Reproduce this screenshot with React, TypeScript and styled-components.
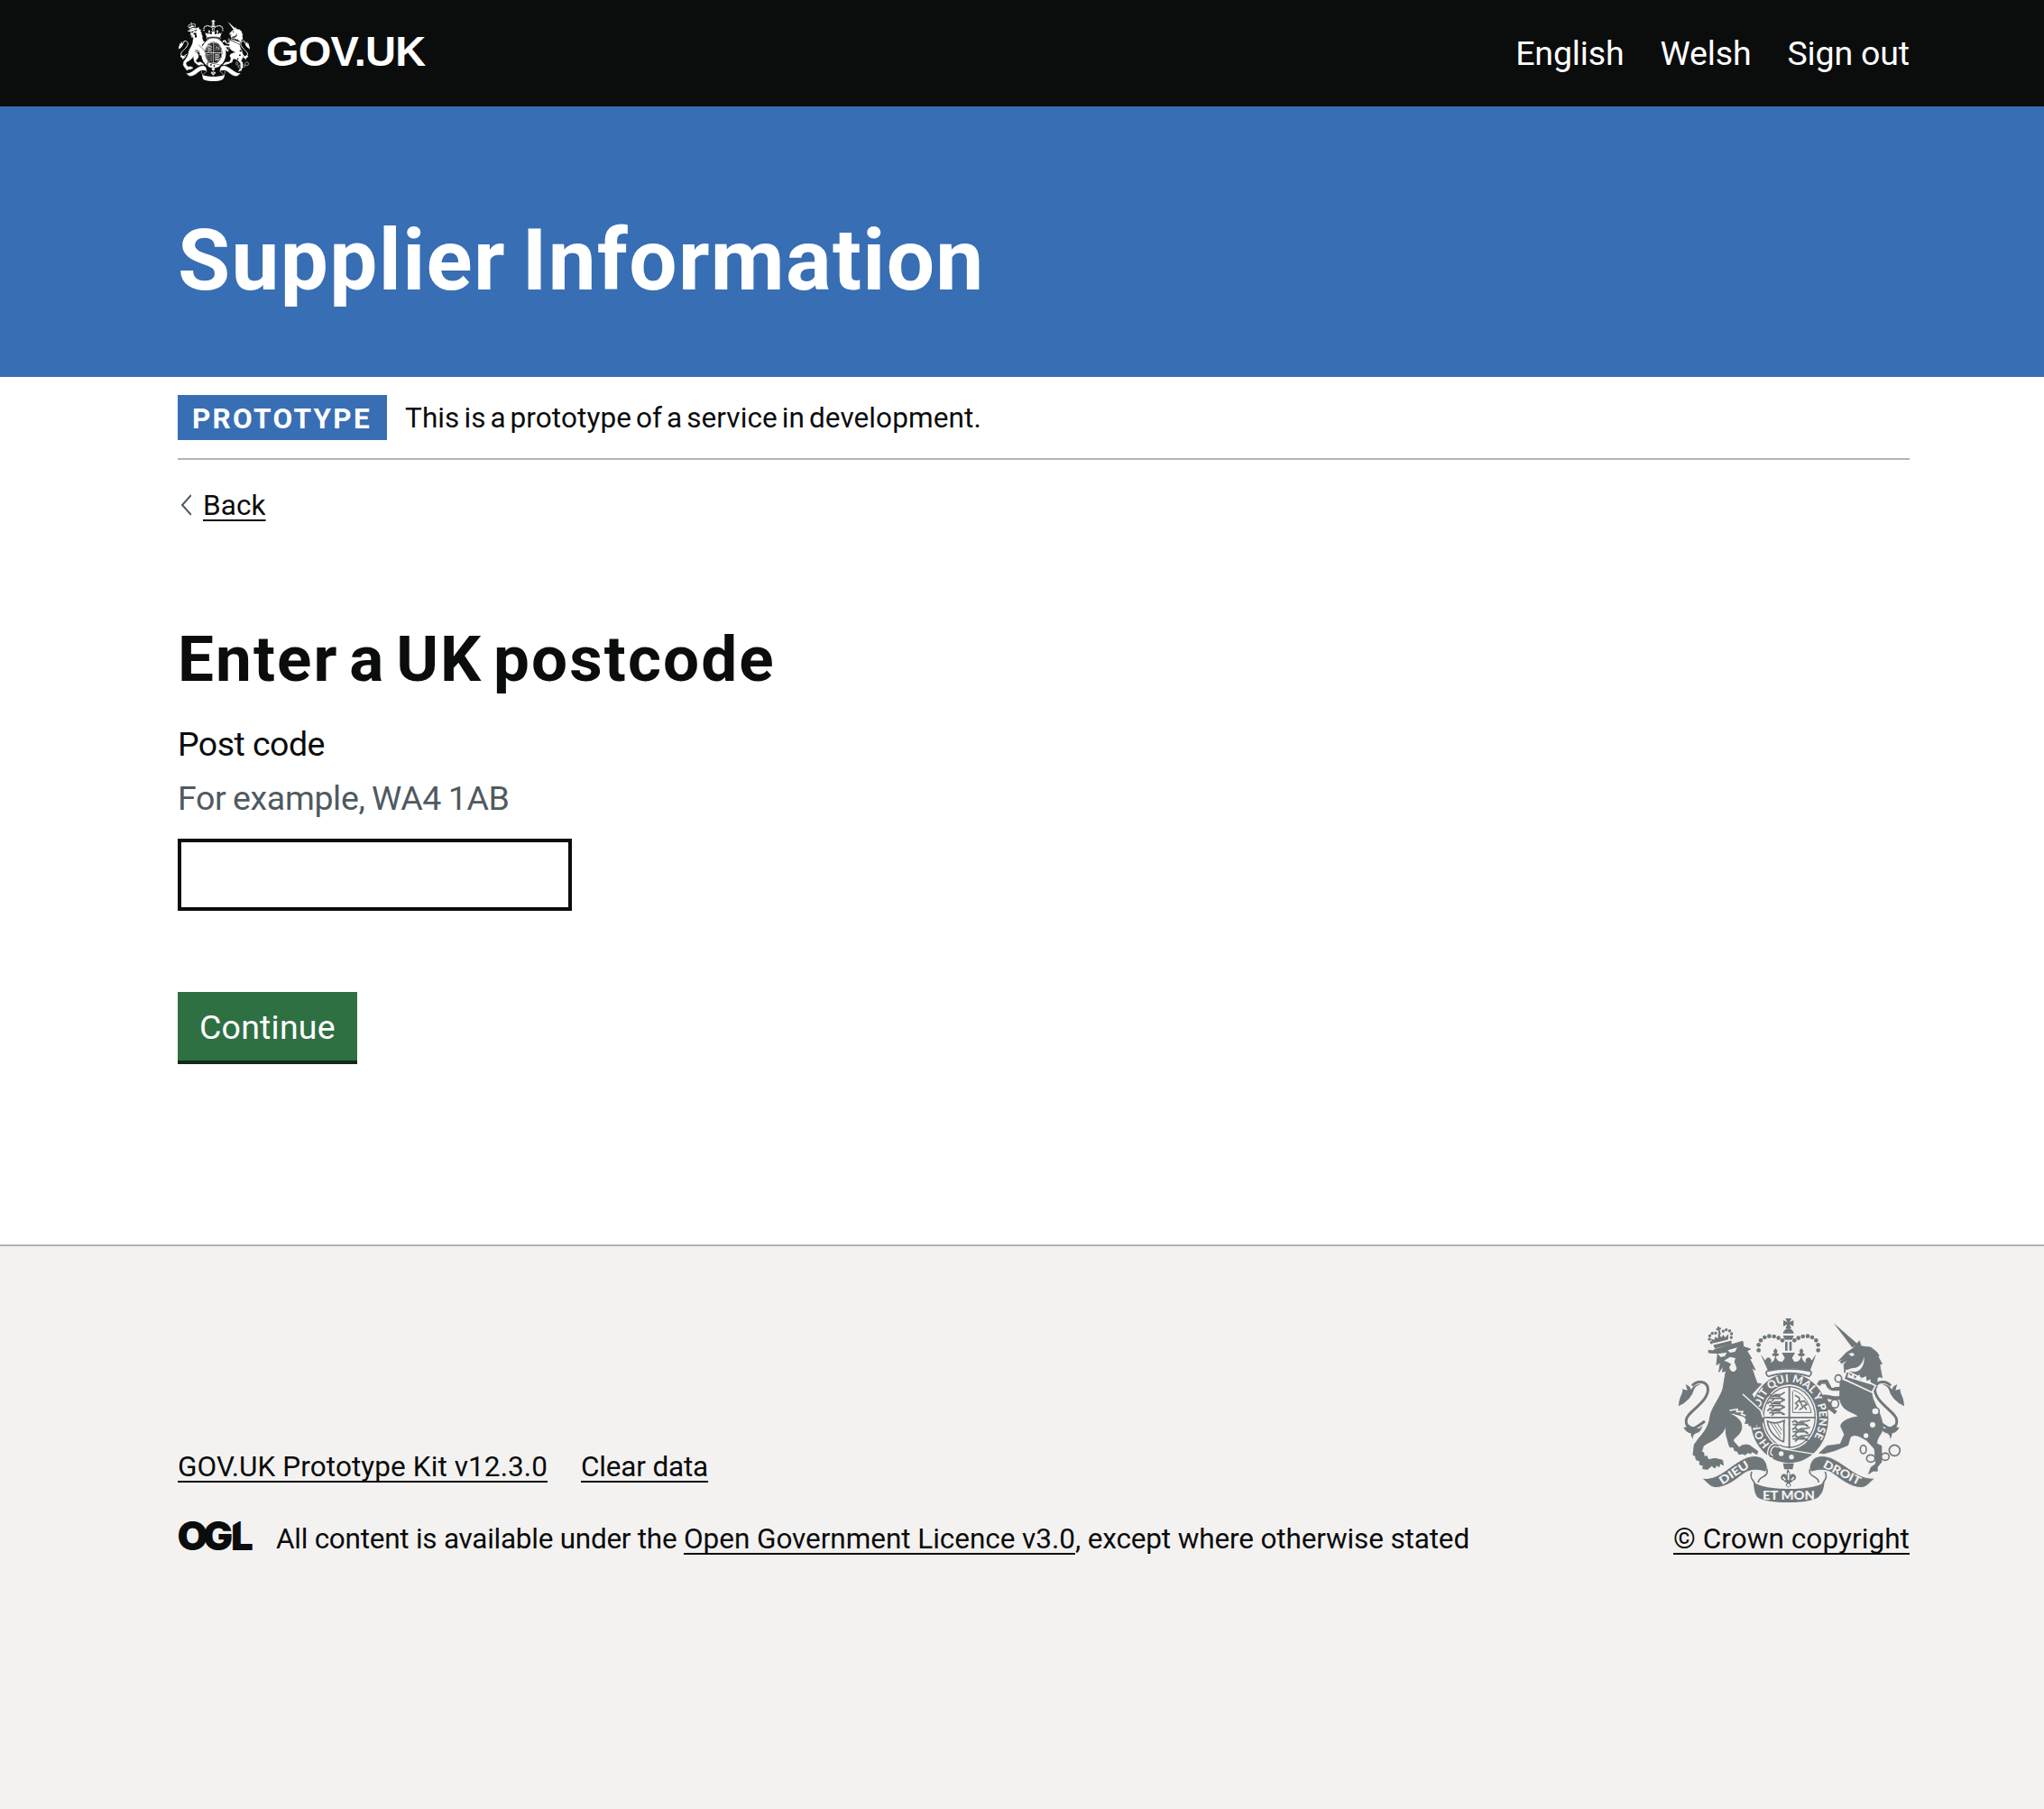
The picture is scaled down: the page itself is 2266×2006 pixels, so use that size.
import React from 'react';
import styled, { createGlobalStyle } from 'styled-components';

const ink = '#0b0c0c';
const blue = '#386eb4';
const grey = '#b1b4b6';
const paper = '#f3f2f1';

const GlobalStyle = createGlobalStyle`
  *, *::before, *::after { box-sizing: border-box; }
  body {
    margin: 0;
    background: ${paper};
    color: ${ink};
    font-family: Roboto, "Liberation Sans", Arial, sans-serif;
  }
`;

const Page = styled.div`
  display: flex;
  flex-direction: column;
  min-height: 2006px;
`;

const Container = styled.div`
  width: 1920px;
  margin-left: 197px;
`;

const Header = styled.header`
  height: 118px;
  background: ${ink};
`;

const HeaderInner = styled(Container)`
  display: flex;
  align-items: center;
  justify-content: space-between;
  height: 100%;
`;

const Brand = styled.a`
  display: flex;
  align-items: center;
  gap: 18px;
  padding: 0 0 6px 1px;
  color: #fff;
  text-decoration: none;
`;

const BrandName = styled.span`
  padding-top: 2px;
  font: 700 47px/60px "Liberation Sans", Arial, sans-serif;
  letter-spacing: -0.8px;
`;

const Nav = styled.nav`
  display: flex;
  gap: 40px;
`;

const NavLink = styled.a`
  color: #fff;
  font-size: 37.5px;
  line-height: 52px;
  letter-spacing: -0.15px;
  text-decoration: none;
`;

const Hero = styled.div`
  height: 300px;
  padding-top: 121px;
  background: ${blue};
`;

const HeroTitle = styled.div`
  color: #fff;
  font-size: 94.5px;
  font-weight: 700;
  line-height: 100px;
  letter-spacing: 1.35px;
  word-spacing: -7px;
`;

const Main = styled.main`
  height: 962px;
  background: #fff;
`;

const PhaseBanner = styled.div`
  display: flex;
  gap: 20px;
  padding: 20px 0;
  border-bottom: 2px solid ${grey};
`;

const PhaseTag = styled.strong`
  width: 232px;
  height: 50px;
  padding: 2px 0 0 16px;
  background: ${blue};
  color: #fff;
  font-size: 31.5px;
  line-height: 49px;
  letter-spacing: 2.3px;
`;

const PhaseText = styled.span`
  height: 50px;
  font-size: 31.5px;
  line-height: 52px;
  letter-spacing: 0.1px;
  word-spacing: -3px;
`;

const TextLink = styled.a<{ $spacing?: number }>`
  color: ${ink};
  font-size: 31.5px;
  line-height: 42px;
  letter-spacing: ${(p) => p.$spacing ?? 0}px;
  text-decoration: underline;
  text-decoration-thickness: 2px;
  text-decoration-skip-ink: none;
  text-underline-offset: 5px;
  white-space: nowrap;
`;

const BackRow = styled.div`
  display: flex;
  align-items: flex-start;
  gap: 13px;
  height: 40px;
  margin-top: 30px;
  padding-left: 2px;
`;

const Chevron = styled.svg`
  margin-top: 8px;
`;

const Heading = styled.h1`
  margin: 111px 0 0;
  font-size: 71px;
  line-height: 80px;
  letter-spacing: 2.1px;
  word-spacing: -8px;
`;

const Form = styled.form`
  display: flex;
  flex-direction: column;
  align-items: flex-start;
  margin-top: 29px;
`;

const Label = styled.label`
  font-size: 37.5px;
  line-height: 50px;
  letter-spacing: -0.55px;
`;

const Hint = styled.div`
  margin: 10px 0 20px;
  color: #505a5f;
  font-size: 37.5px;
  line-height: 50px;
  letter-spacing: -0.35px;
  word-spacing: -1.3px;
`;

const Input = styled.input`
  width: 437px;
  height: 80px;
  padding: 10px;
  border: 4px solid ${ink};
  border-radius: 0;
  background: #fff;
  font: inherit;
  font-size: 37.5px;
`;

const Button = styled.button`
  width: 199px;
  height: 80px;
  margin-top: 90px;
  padding: 2px 0 0 24px;
  border: 0;
  border-bottom: 4px solid #0f2a1b;
  border-radius: 0;
  background: #2f7043;
  color: #fff;
  font: inherit;
  font-size: 37.5px;
  line-height: 74px;
  letter-spacing: 0.2px;
  text-align: left;
`;

const Footer = styled.footer`
  flex: 1;
  border-top: 2px solid ${grey};
  background: ${paper};
`;

const FooterInner = styled(Container)`
  display: flex;
  align-items: flex-end;
  justify-content: space-between;
  padding-top: 80px;
`;

const FooterMeta = styled.div`
  display: flex;
  flex-direction: column;
  gap: 38px;
`;

const FooterLinks = styled.div`
  display: flex;
  gap: 37px;
`;

const Licence = styled.div`
  display: flex;
  gap: 24px;
`;

const OglMark = styled.svg`
  overflow: visible;
`;

const LicenceText = styled.span<{ $spacing: number }>`
  font-size: 31.5px;
  line-height: 42px;
  letter-spacing: ${(p) => p.$spacing}px;
  white-space: pre;
`;

const LicenceLine = styled.div`
  display: flex;
`;

const Copyright = styled.div`
  display: flex;
  flex-direction: column;
  align-items: flex-end;
  gap: 20px;
`;

const CrestSlot = styled.div`
  display: flex;
  padding-right: 6px;
`;

const mirror = 'translate(876 0) scale(-1 1)';
const crownBeads = [[329, 172], [329, 154], [336, 139], [349, 129], [364, 125], [380, 126], [395, 131], [408, 139]];
const lionBeads = [[-34, 4], [-38, -8], [-34, -19], [-24, -25], [-13, -23], [13, -23], [24, -25], [34, -19], [38, -8], [34, 4]];

interface CrestProps {
  fg: string;
  bg: string;
  width: number;
  height: number;
  lettering?: boolean;
}

function Crest({ fg, bg, width, height, lettering = true }: CrestProps) {
  return (
    <svg width={width} height={height} viewBox="63 66 750 612" preserveAspectRatio="none" fill={fg}>
      {/* garter and shield */}
      <ellipse cx="431" cy="398" rx="130" ry="149" />
      <ellipse cx="431" cy="394" rx="92" ry="108" fill={bg} />
      <ellipse cx="431" cy="394" rx="88" ry="103" />
      <ellipse cx="431" cy="394" rx="84" ry="99" fill={bg} />
      <path d="M428 292h6v206h-6zM343 393h176v5H343z" />
      <g fill="none" stroke={fg} strokeWidth="5">
        {[322, 346, 370].map((y) => (
          <path key={y} d={`M358 ${y + 4}l8-8 8 8 10-6h18l14-8M364 ${y + 10}h42l10 6M372 ${y + 2}l30 2M380 ${y + 12}l-8 8M404 ${y + 8}l6 8`} />
        ))}
        {[410, 434, 458].map((y) => (
          <path key={y} d={`M440 ${y + 2}l10-6 10 8 12-6h16l12-4M442 ${y + 9}h44l8 6M452 ${y + 2}l30 2M458 ${y + 10}l-8 8M484 ${y + 8}l6 8`} />
        ))}
        <path d="M444 305c20 4 52 30 60 74h-62V308" strokeWidth="3" />
        <path d="M450 322l14 8 2 14 14-4 10 12-10 4 8 14M464 338l-12 10 8 8-10 12M468 344l8 18-12 8" />
        <path d="M358 408c14 6 36 8 56-2-4 26 2 40-2 70-14-4-50-28-54-68z" />
        <path d="M368 412l34 52M378 414l26 38M390 414l16 24" strokeWidth="3" />
      </g>
      {/* lower strap and buckle */}
      <path d="M380 490c40 18 90 24 132 18-40 40-100 40-136 20z" />
      <path d="M372 486l20 4 16 10 110 18" fill="none" stroke={bg} strokeWidth="4" />
      <path d="M396 490q-22-10-30 12t10 24q-14-2-12-12" fill="none" stroke={bg} strokeWidth="14" />
      <path d="M396 490q-22-10-30 12t10 24" fill="none" stroke={fg} strokeWidth="6" />
      <circle cx="404" cy="516" r="8" fill={bg} />
      <circle cx="438" cy="527" r="8" fill={bg} />
      {lettering && (
        <>
          <path id="motto" d="M366.7 484.6A100 117 0 1 1 495.3 484.6" fill="none" />
          <text fill={bg} fontFamily="Lato, sans-serif" fontWeight="900" fontSize="36">
            <textPath href="#motto" textLength="510">HONI SOIT QUI MAL Y PENSE</textPath>
          </text>
        </>
      )}
      {/* crown */}
      <path d="M354 248q0-14 18-14h112q20 0 20 14l-8 14q-66-28-136 0z" fill={bg} />
      <path d="M357 241q72-15 144 0 8 8-4 18-64-22-136 0-12-10-4-18z" fill={bg} stroke={fg} strokeWidth="5" />
      <path d="M336 186q10 12 14 20 10-18 20-4 4 10-4 12 14 0 18-22-12 0-10-8 10 0 4-10l7-9 7 9q-6 10 4 10 2 8-10 8 4 20 22 18l8-12-10-18h44l-10 18 8 12q18 2 22-18-12 0-10-8 10 0 4-10l7-9 7 9q-6 10 4 10 2 8-10 8 4 22 18 22-8-2-4-12 10-14 20 4 4-8 14-20l-20 54q-70-16-140 0z" />
      <path d="M417 143h8v30h-8zM431 143h8v30h-8zM410 123h36l-6 14h-24zM410 116q2-14 18-16 16 2 18 16zM418 66h20l-6 12 13-6v20l-13-6 6 14h-20l6-14-13 6V72l13 6z" />
      {crownBeads.map(([x, y]) => (
        <React.Fragment key={`${x}-${y}`}>
          <circle cx={x} cy={y} r="7" />
          <circle cx={856 - x} cy={y} r="7" />
        </React.Fragment>
      ))}
      <path d="M410 548h36l-4 20h-28zM425 566q14 18 6 26 10-16 20-4 8 12-8 18-2 6-10 6l4 10-9 7-9-7 4-10q-8 0-10-6-16-6-8-18 10-12 20 4-6-8 0-26z" />
      <circle cx="428" cy="621" r="5" fill={bg} />
      <path d="M428 578v26M410 594l8 10M446 594l-8 10" stroke={bg} strokeWidth="5" />
      {/* tails */}
      {[undefined, mirror].map((t, i) => (
        <g key={i} transform={t}>
          <path d="M63 358c0-32 18-46 12-57l17 4-6-20q16 6 18 18 8-18 34-19-20 6-24 18-8 34-51 56z" />
          <path d="M108 290c14-18 48-18 52 8 6 34-46 68-64 90-20 22-2 62 34 34l20-14" fill="none" stroke={fg} strokeWidth="9" />
          <path d="M79 428q16 2 16-10 30 26 48 4-6 22-22 26-14 6-10 20-8-8-8-20-16-2-24-20z" />
        </g>
      ))}
      {/* lion */}
      <path
        stroke={fg}
        strokeWidth="3"
        strokeLinejoin="round"
        d="M163 180l-1-8 14 2 10-6 90-26 2 18 24 8-12 6 16 26-8-2 20 40-12-8 10 30 8 22 14 2-32 34 16 27 12 30 12 27-6 16-6-6-2 14-10-8-4 12-10-10-10 4-4-10-10 2 4-14-8-10-36-10-16 0c30 10 48 26 44 52-8 26-30 30-27 40l19 22q14-14 34-8l28 20-3 10-18-10-2 8-10-4-8 8-10-4-12 2-4-10-10-2-4-12-12 0-4-12-8-30-2-30c-6 30-34 46-62 60l-12 8-2 8-4 10 8 6 0 12 10-2 4 12 24-4 24 6 2 16-10-6-4 12-8-6-6 10-10-8-14 12-16-2 2-10-12-4 0-12-12-4-2-12-8-4 2-16 2-18 14-20c16-18 34-40 38-70 2-30 38-70 44-100 4-24 6-42 10-56l-12 4 2-20-14 20 5-32-13 9 4-39z"
      />
      <g transform="translate(204 134) rotate(-14)">
        <path d="M-30 14h62l-2 12h-58zM-28 8l-6-18 12 8 4-10 8 8 6-18 6 18 8-8 4 10 14-8-6 18z" />
        <path d="M-28 11h58" stroke={bg} strokeWidth="3" />
        {lionBeads.map(([x, y]) => (
          <circle key={`${x}-${y}`} cx={x} cy={y} r="5" />
        ))}
        <path d="M0-42v28M-8-34H8" stroke={fg} strokeWidth="6" />
      </g>
      <path d="M193 184l30-5-6 12-14 4zM226 172l32-9-8 14-16 3zM214 206l20-12 18 4-4 12 8 22q-4 14-16 10-10-6-8-16l6-8-10-6z" fill={bg} />
      <path d="M276 318q34 30 60 54l8 24M232 372l26-4-2 8 20 0-4 8 14 6" fill="none" stroke={bg} strokeWidth="5" />
      {/* unicorn */}
      <path d="M578 81l80 70-18 12z" />
      <path
        stroke={fg}
        strokeWidth="2"
        strokeLinejoin="round"
        d="M594 208l26-28 22-14 22-26 6 18 32 4 20 16 8 12-4 2 14 26-8 0 2 14 6 32-8-4-8 4-2 34-108-52-2-28 12-12-14 6q-6 8-10-2l12-10z"
      />
      <path d="M628 184l14-4 6 8-10 4zM614 240l24-8q34 0 42-40 2 44-30 52z" fill={bg} />
      <path
        stroke={fg}
        strokeWidth="2"
        strokeLinejoin="round"
        d="M600 268l106 40c-4 30 30 66 36 112 4 30-18 34-20 62l16 8v54l-14 16 0 14-14 0-16 10 8-22 16-12-4-50-26-28-18-10c-16-8-28-10-36 0l-8 26-44 18-36 10-16-2 26-24 44-6 14-32-12-26c-2-20 38-32 58-34-18-18-56-14-62-62z"
      />
      <path d="M622 240l96 50-12 22-94-44z" fill={fg} stroke={bg} strokeWidth="5" />
      <path d="M624 262l4-16 8 12 8-8 4 16 10-8 6-6 4 18 10-8 8-4 2 18 12-8 2 18z" fill={bg} />
      <g fill="none" stroke={fg} strokeLinejoin="round">
        <path d="M606 300c-20-2-34 6-44-8l-8-16-20 2-6 10M604 328c-20 10-36-2-58-2l18 36 22 18M562 344l2 26" strokeWidth="13" />
        <g strokeWidth="5" fill={bg}>
          <ellipse cx="594" cy="266" rx="11" ry="12" />
          <ellipse cx="582" cy="350" rx="13" ry="14" />
          <ellipse cx="717" cy="375" rx="13" ry="12" />
          <ellipse cx="677" cy="502" rx="10" ry="14" />
          <ellipse cx="702" cy="532" rx="14" ry="12" />
          <ellipse cx="750" cy="526" rx="13" ry="12" />
          <circle cx="781" cy="505" r="18" />
        </g>
      </g>
      <circle cx="576" cy="290" r="7" fill={bg} />
      <circle cx="708" cy="420" r="9" fill={bg} />
      <circle cx="686" cy="456" r="8" fill={bg} />
      {/* ribbon */}
      <g stroke={bg} strokeWidth="3">
        <path d="M138 597c60 10 90-42 150-68 34-12 66-4 70 34l-6 14c-26-10-52-8-70 4-28 20-58 47-96 48-22-2-26-17-48-32z" />
        <path d="M718 597c-60 6-90-42-150-68-34-12-66-4-70 34l6 14c26-10 52-8 70 4 28 20 58 47 96 48 22-2 26-17 48-32z" />
      </g>
      <path
        d="M356 566c10 30-30 24-28 46M306 576c-10 26 10 28 10 42M500 566c-10 30 32 24 28 46M550 576c12 26-8 28-8 42"
        fill="none"
        stroke={fg}
        strokeWidth="5"
      />
      <path d="M312 608c20 32 212 34 236 0q-2 34-18 50c-20 28-180 26-206 2q-12-18-12-52z" />
      {lettering && (
        <g fill={bg} fontFamily="Lato, sans-serif" fontWeight="900" fontSize="42">
          <text transform="translate(208 620) rotate(-33)" fontSize="38" textLength="110" lengthAdjust="spacingAndGlyphs">DIEU</text>
          <text transform="translate(342 668)" textLength="174" lengthAdjust="spacingAndGlyphs">ET MON</text>
          <text transform="translate(541 560) rotate(27)" fontSize="38" textLength="134" lengthAdjust="spacingAndGlyphs">DROIT</text>
        </g>
      )}
    </svg>
  );
}

function OglLogo() {
  return (
    <OglMark width="85" height="40" viewBox="0 0 85 40" fill={ink} fontFamily="Inter, sans-serif" fontWeight="900" fontSize="44">
      <text y="33" x="-0.5 28 59">OGL</text>
      <path d="M60 0h10L60 6z" fill={paper} />
    </OglMark>
  );
}

export default function App() {
  return (
    <>
      <GlobalStyle />
      <Page>
        <Header>
          <HeaderInner>
            <Brand>
              <Crest fg="#fff" bg={ink} width={79} height={68} lettering={false} />
              <BrandName>GOV.UK</BrandName>
            </Brand>
            <Nav>
              <NavLink>English</NavLink>
              <NavLink>Welsh</NavLink>
              <NavLink>Sign out</NavLink>
            </Nav>
          </HeaderInner>
        </Header>
        <Hero>
          <Container>
            <HeroTitle>Supplier Information</HeroTitle>
          </Container>
        </Hero>
        <Main>
          <Container>
            <PhaseBanner>
              <PhaseTag>PROTOTYPE</PhaseTag>
              <PhaseText>This is a prototype of a service in development.</PhaseText>
            </PhaseBanner>
            <BackRow>
              <Chevron width="13" height="24" viewBox="0 0 13 24" fill="none" stroke="#505a5f" strokeWidth="2">
                <path d="M13 1L3 12l10 11" />
              </Chevron>
              <TextLink $spacing={0.1}>Back</TextLink>
            </BackRow>
            <Heading>Enter a UK postcode</Heading>
            <Form>
              <Label htmlFor="postcode">Post code</Label>
              <Hint>For example, WA4 1AB</Hint>
              <Input id="postcode" type="text" />
              <Button type="button">Continue</Button>
            </Form>
          </Container>
        </Main>
        <Footer>
          <FooterInner>
            <FooterMeta>
              <FooterLinks>
                <TextLink $spacing={0.09}>GOV.UK Prototype Kit v12.3.0</TextLink>
                <TextLink $spacing={-0.18}>Clear data</TextLink>
              </FooterLinks>
              <Licence>
                <OglLogo />
                <LicenceLine>
                  <LicenceText $spacing={-0.26}>{'All content is available under the '}</LicenceText>
                  <TextLink $spacing={-0.05}>Open Government Licence v3.0</TextLink>
                  <LicenceText $spacing={-0.14}>, except where otherwise stated</LicenceText>
                </LicenceLine>
              </Licence>
            </FooterMeta>
            <Copyright>
              <CrestSlot>
                <Crest fg="#6f777b" bg={paper} width={250} height={204} />
              </CrestSlot>
              <TextLink $spacing={0.07}>© Crown copyright</TextLink>
            </Copyright>
          </FooterInner>
        </Footer>
      </Page>
    </>
  );
}
